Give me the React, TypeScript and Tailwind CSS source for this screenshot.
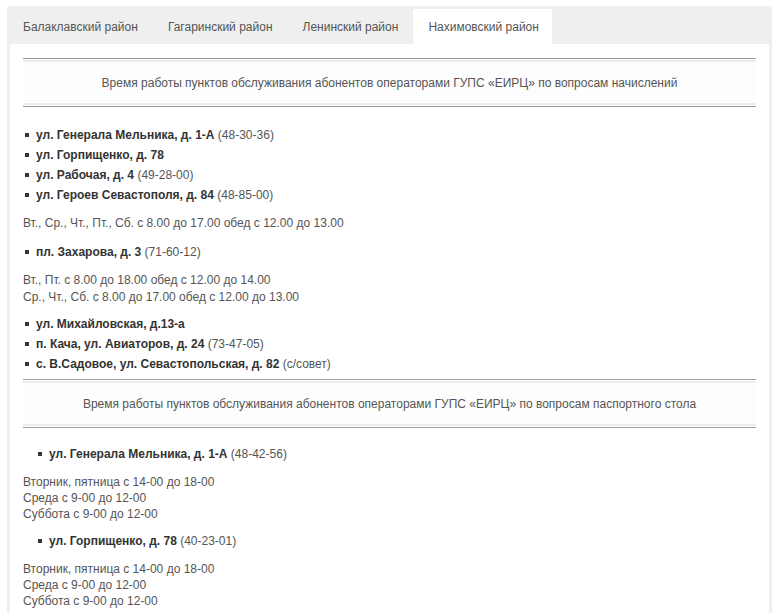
import React from 'react';

const tabs = ['Балаклавский район', 'Гагаринский район', 'Ленинский район', 'Нахимовский район'];

const Heading: React.FC<{ text: string }> = ({ text }) => (
  <div className="border-t border-b border-[#9c9c9c]">
    <div className="h-[2px] bg-[#ececec] mt-px" />
    <div className="h-[41px] flex items-center justify-center bg-[#fdfdfd] text-[12px] text-[#555]">
      {text}
    </div>
    <div className="h-[2px] bg-[#ececec] mb-px" />
  </div>
);

const Item: React.FC<{ addr: string; note?: string; indent?: boolean }> = ({ addr, note, indent }) => (
  <li className={`flex items-center leading-[20px] ${indent ? 'pl-[15px]' : 'pl-[2px]'}`}>
    <span className="w-[4px] h-[4px] bg-[#333] mr-[7px] shrink-0" />
    <span className="font-bold text-[#333]">{addr}</span>
    {note && <span className="text-[#555]">&nbsp;{note}</span>}
  </li>
);

export default function App() {
  return (
    <div className="min-h-screen bg-white pt-[6px] pl-[7px] font-['Liberation_Sans',Arial,sans-serif]">
      <div className="w-[765px] bg-[#efefef] rounded-t-[3px] pb-[6px]">
        <div className="flex items-end h-[38px]">
          {tabs.map((t, i) => (
            <div
              key={t}
              className={`h-[35px] flex items-center text-[12px] text-[#555] ${i === 3 ? 'bg-white pl-[15px] pr-[13px]' : i === 0 ? 'pl-[16px] pr-[15px]' : 'px-[15px]'}`}
            >
              {t}
            </div>
          ))}
        </div>
        <div className="mx-[3px] bg-white px-[13px] pt-[14px] pb-[6px] text-[12px] text-[#555]">
          <Heading text="Время работы пунктов обслуживания абонентов операторами ГУПС «ЕИРЦ» по вопросам начислений" />

          <ul className="mt-[18px]">
            <Item addr="ул. Генерала Мельника, д. 1-А" note="(48-30-36)" />
            <Item addr="ул. Горпищенко, д. 78" />
            <Item addr="ул. Рабочая, д. 4" note="(49-28-00)" />
            <Item addr="ул. Героев Севастополя, д. 84" note="(48-85-00)" />
          </ul>
          <p className="leading-[17px] mt-[10px]">Вт., Ср., Чт., Пт., Сб. с 8.00 до 17.00 обед с 12.00 до 13.00</p>
          <ul className="mt-[10px]">
            <Item addr="пл. Захарова, д. 3" note="(71-60-12)" />
          </ul>
          <p className="leading-[17px] mt-[10px]">
            Вт., Пт. с 8.00 до 18.00 обед с 12.00 до 14.00
            <br />
            Ср., Чт., Сб. с 8.00 до 17.00 обед с 12.00 до 13.00
          </p>
          <ul className="mt-[8px] mb-[5px]">
            <Item addr="ул. Михайловская, д.13-а" />
            <Item addr="п. Кача, ул. Авиаторов, д. 24" note="(73-47-05)" />
            <Item addr="с. В.Садовое, ул. Севастопольская, д. 82" note="(с/совет)" />
          </ul>

          <Heading text="Время работы пунктов обслуживания абонентов операторами ГУПС «ЕИРЦ» по вопросам паспортного стола" />

          <ul className="mt-[16px]">
            <Item indent addr="ул. Генерала Мельника, д. 1-А" note="(48-42-56)" />
          </ul>
          <p className="leading-[16px] mt-[10px]">
            Вторник, пятница с 14-00 до 18-00
            <br />
            Среда с 9-00 до 12-00
            <br />
            Суббота с 9-00 до 12-00
          </p>
          <ul className="mt-[9px]">
            <Item indent addr="ул. Горпищенко, д. 78" note="(40-23-01)" />
          </ul>
          <p className="leading-[16px] mt-[10px]">
            Вторник, пятница с 14-00 до 18-00
            <br />
            Среда с 9-00 до 12-00
            <br />
            Суббота с 9-00 до 12-00
          </p>
        </div>
      </div>
    </div>
  );
}
